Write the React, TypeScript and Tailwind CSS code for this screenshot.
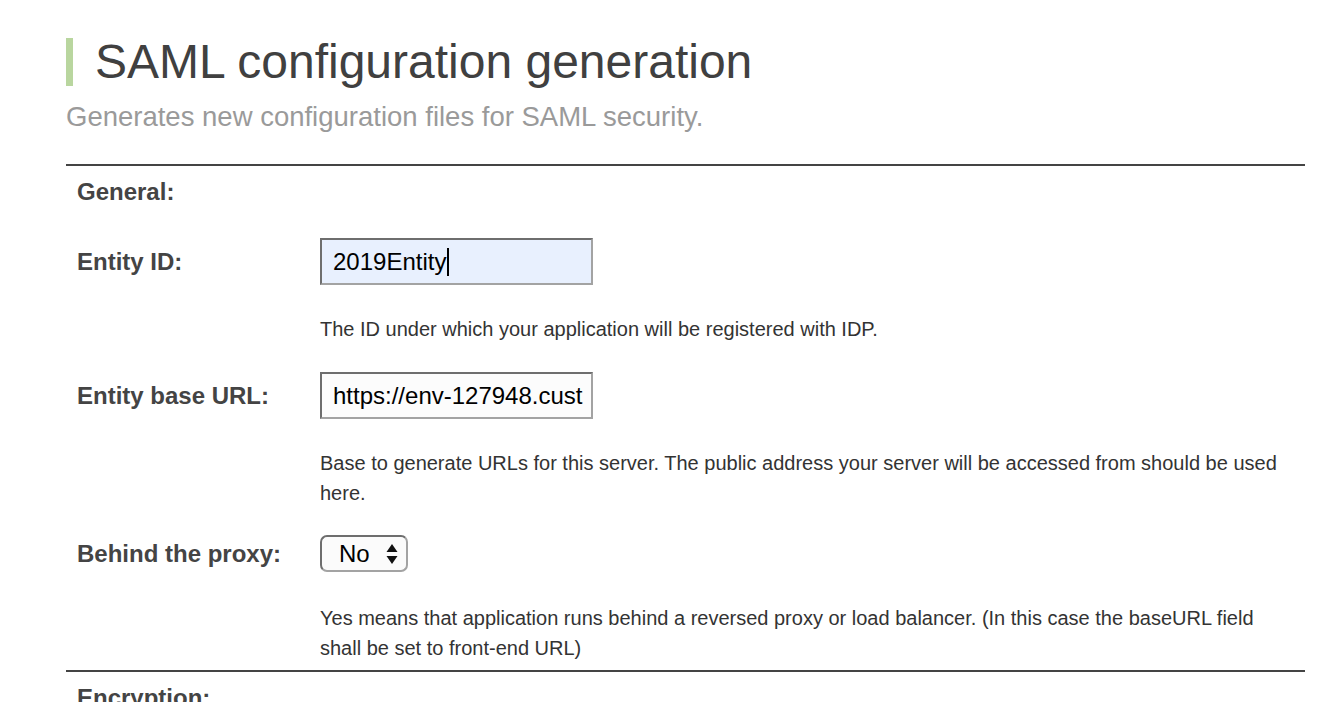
import type { ReactNode } from 'react';

type RowProps = {
  label: string;
  control: ReactNode;
  help: string;
  top?: string;
  helpTop?: string;
};

const Field = ({ label, control, help, top = 'mt-[29px]', helpTop = 'mt-[29px]' }: RowProps) => {
  return (
    <>
      {/* Label + control */}
      <div className={`grid grid-cols-[254px_1fr] items-center ${top}`}>
        <div className="pl-[11px] text-[24px] leading-[28px] font-bold text-[#444]">{label}</div>
        <div>{control}</div>
      </div>
      {/* Help text */}
      <div className={`grid grid-cols-[254px_1fr] ${helpTop}`}>
        <div />
        <p className="pr-[10px] text-[20px] leading-[30px] text-[#333]">{help}</p>
      </div>
    </>
  );
};

const TextBox = ({ value, filled, caret }: { value: string; filled?: boolean; caret?: boolean }) => (
  <div
    className={`w-[273px] h-[47px] flex items-center pl-[11px] overflow-hidden whitespace-nowrap border-2 border-t-[#6e6e6e] border-l-[#6e6e6e] border-r-[#a3a3a3] border-b-[#a3a3a3] text-[24px] text-black ${
      filled ? 'bg-[#e8f0fe]' : 'bg-[#fcfcfc]'
    }`}
  >
    <span>{value}</span>
    {caret && <span className="inline-block w-[2px] h-[28px] bg-black ml-[1px]" />}
  </div>
);

const SelectBox = () => (
  <div className="w-[88px] h-[37px] flex items-center justify-between pl-[17px] pr-[8px] rounded-[7px] border-2 border-t-[#6e6e6e] border-l-[#6e6e6e] border-r-[#a3a3a3] border-b-[#a3a3a3] bg-[#fbfbfb] text-[24px] text-black">
    <span>No</span>
    <svg width="12" height="22" viewBox="0 0 12 22">
      <path d="M6 1 L11.5 9 L0.5 9 Z" fill="#111" />
      <path d="M6 21 L11.5 13 L0.5 13 Z" fill="#111" />
    </svg>
  </div>
);

const App = () => {
  return (
    <div className="w-[1322px] h-[702px] overflow-hidden bg-white" style={{ fontFamily: '"Liberation Sans", Arial, sans-serif' }}>
      <div className="pl-[66px] pt-[38px] w-[1305px]">
        {/* Page header */}
        <div className="flex items-stretch gap-[22px]">
          <div className="w-[7px] bg-[#b9d69f]" />
          <h1 className="text-[48px] leading-[48px] text-[#404040]">SAML configuration generation</h1>
        </div>
        <p className="mt-[15px] text-[27.5px] leading-[32px] text-[#9a9a9a]">
          Generates new configuration files for SAML security.
        </p>

        {/* General section */}
        <div className="mt-[31px] border-t-2 border-[#444]">
          <div className="pt-[12px] pl-[11px] text-[24px] leading-[28px] font-bold text-[#444]">General:</div>
          <div className="pt-[3px]">
            <Field
              label="Entity ID:"
              control={<TextBox value="2019Entity" filled caret />}
              help="The ID under which your application will be registered with IDP."
            />
            <Field
              label="Entity base URL:"
              top="mt-[28px]"
              control={<TextBox value="https://env-127948.cust" />}
              help="Base to generate URLs for this server. The public address your server will be accessed from should be used here."
            />
            <Field
              label="Behind the proxy:"
              top="mt-[27px]"
              helpTop="mt-[31px]"
              control={<SelectBox />}
              help="Yes means that application runs behind a reversed proxy or load balancer. (In this case the baseURL field shall be set to front-end URL)"
            />
          </div>
        </div>

        {/* Encryption section */}
        <div className="mt-[7px] border-t-2 border-[#444]">
          <div className="pt-[12px] pl-[11px] text-[24px] leading-[28px] font-bold text-[#444]">Encryption:</div>
        </div>
      </div>
    </div>
  );
};

export default App;
